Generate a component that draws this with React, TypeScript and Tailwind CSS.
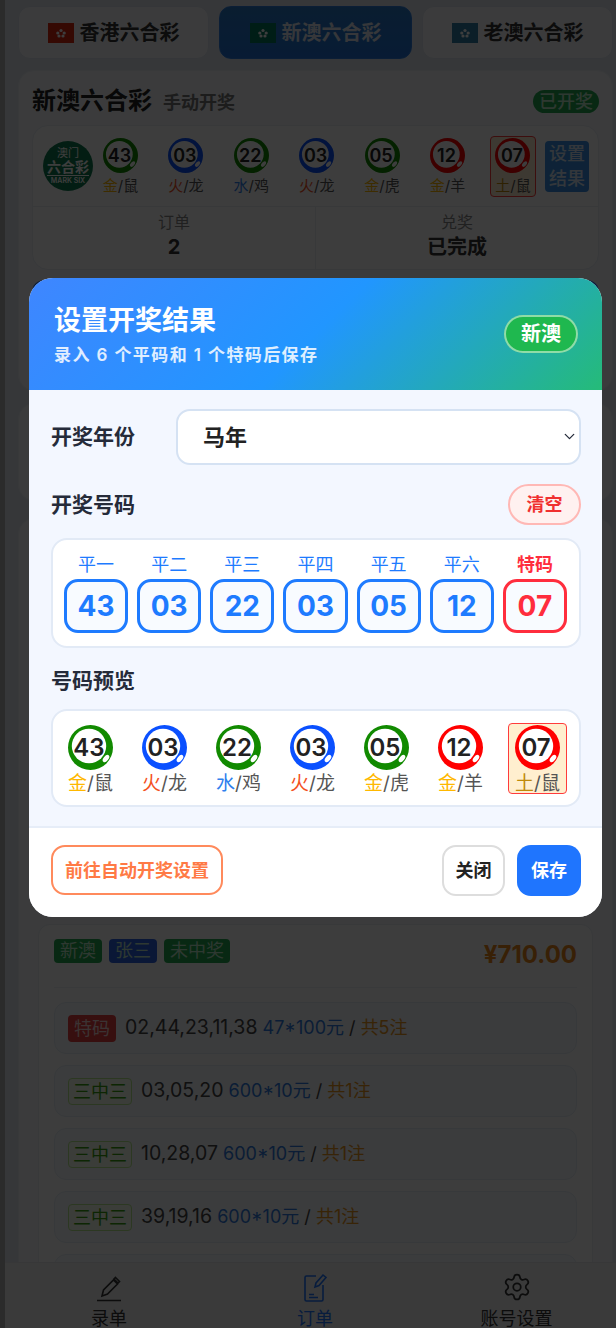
import { ChevronDown, Settings } from "lucide-react";

const font = "font-[Inter,'Noto_Sans_CJK_SC',sans-serif]";

const elementColor: Record<string, string> = {
  金: "text-[#ffb800]",
  火: "text-[#f4511e]",
  水: "text-[#2f80ed]",
  土: "text-[#c08a0a]",
};

const ballColor: Record<string, string> = {
  green: "#118a00",
  blue: "#0a50ff",
  red: "#ff0000",
};

const balls = [
  { no: "43", color: "green", el: "金", zodiac: "鼠" },
  { no: "03", color: "blue", el: "火", zodiac: "龙" },
  { no: "22", color: "green", el: "水", zodiac: "鸡" },
  { no: "03", color: "blue", el: "火", zodiac: "龙" },
  { no: "05", color: "green", el: "金", zodiac: "虎" },
  { no: "12", color: "red", el: "金", zodiac: "羊" },
];
const special = { no: "07", color: "red", el: "土", zodiac: "鼠" };

const slots = [
  ["平一", "43"],
  ["平二", "03"],
  ["平三", "22"],
  ["平四", "03"],
  ["平五", "05"],
  ["平六", "12"],
];

function Ball({ no, color, small }: { no: string; color: string; small?: boolean }) {
  return (
    <div className={`relative flex shrink-0 items-center justify-center ${small ? "h-[35px] w-[35px]" : "h-[45px] w-[45px]"}`}>
      <svg viewBox="0 0 45 45" className="absolute inset-0 h-full w-full">
        <circle cx="22.5" cy="22.5" r="22.5" fill={ballColor[color]} />
        <circle cx="21" cy="21" r="17.2" fill="#fff" />
        <ellipse cx="38" cy="33.5" rx="4.2" ry="2.4" fill="#fff" transform="rotate(-50 38 33.5)" />
      </svg>
      <span className={`relative font-semibold text-[#222] ${small ? "mr-[2px] text-[18px]" : "mr-[3px] text-[24px]"}`}>{no}</span>
    </div>
  );
}

function BallLabel({ el, zodiac, small }: { el: string; zodiac: string; small?: boolean }) {
  return (
    <div className={`whitespace-nowrap text-center text-[#555] ${small ? "mt-[3px] text-[15px] leading-[20px]" : "mt-[1px] text-[19px] leading-[25px]"}`}>
      <span className={elementColor[el]}>{el}</span>/{zodiac}
    </div>
  );
}

function OrderRow({ tag, nums, bet, count }: { tag: string; nums: string; bet: string; count: string }) {
  return (
    <div className="flex h-[52px] items-center gap-[9px] rounded-xl border border-[#e6eef6] bg-[#f7f9fc] pl-[13px] text-[18px] text-[#444]">
      {tag === "特码" ? (
        <span className="flex h-[27px] w-[48px] items-center justify-center rounded bg-[#e53e3e] text-[18px] text-[#f5d5d5]">{tag}</span>
      ) : (
        <span className="flex h-[27px] w-[64px] items-center justify-center rounded border border-[#b7eb8f] bg-[#f6ffed] text-[18px] text-[#389e0d]">{tag}</span>
      )}
      <span>
        <span className="text-[19.5px]">{nums}</span> <span className="text-[#2f7be0]">{bet}</span> / <span className="text-[#e8961e]">{count}</span>
      </span>
    </div>
  );
}

function Flag({ bg }: { bg: string }) {
  return (
    <svg viewBox="0 0 26 20" className="h-[20px] w-[26px] shrink-0">
      <rect width="26" height="20" fill={bg} />
      <circle cx="13" cy="7.5" r="1.6" fill="#fff" />
      <circle cx="9.800" cy="10" r="1.600" fill="#fff" />
      <circle cx="16.200" cy="10" r="1.600" fill="#fff" />
      <circle cx="11" cy="13" r="1.600" fill="#fff" />
      <circle cx="15" cy="13" r="1.600" fill="#fff" />
    </svg>
  );
}

export default function App() {
  return (
    <div className={`relative h-[1328px] w-[616px] overflow-hidden bg-[#b4b4b4] pl-[5px] ${font}`}>
      {/* page behind the dialog */}
      <div className="h-full bg-[#e3e7ee] pl-[13px] pr-[3px] pt-[6px]">
        <div className="flex gap-[10px]">
          <div className="flex h-[53px] w-[191px] items-center justify-center gap-[6px] rounded-xl border border-[#dde3ec] bg-[#f4f6fa] text-[20px] font-semibold text-[#333]">
            <Flag bg="#de2910" />
            香港六合彩
          </div>
          <div className="flex h-[53px] w-[193px] items-center justify-center gap-[6px] rounded-xl border border-[#2f7fe0] bg-gradient-to-b from-[#2a79c8] to-[#2272d8] text-[20px] font-semibold text-[#dfe6f0]">
            <Flag bg="#00785e" />
            新澳六合彩
          </div>
          <div className="flex h-[53px] w-[191px] items-center justify-center gap-[6px] rounded-xl border border-[#dde3ec] bg-[#f4f6fa] text-[20px] font-semibold text-[#333]">
            <Flag bg="#2f7ea8" />
            老澳六合彩
          </div>
        </div>

        <div className="mt-[11px] h-[321px] rounded-2xl border border-[#e8ecf3] bg-[#f4f6fa] px-[13px] pt-[14px]">
          <div className="flex items-center justify-between">
            <div className="flex items-baseline gap-[11px]">
              <span className="text-[24px] font-bold leading-[32px] text-[#222]">新澳六合彩</span>
              <span className="text-[18px] font-semibold text-[#777]">手动开奖</span>
            </div>
            <span className="rounded-full bg-[#22a94f] px-[6px] text-[18px] font-medium leading-[23px] text-[#bfe8cc]">已开奖</span>
          </div>

          <div className="mt-[8px] rounded-2xl border border-[#e8ecf3] bg-white">
            <div className="flex h-[81px] items-center gap-[8px] border-b border-[#e8ecf3] pl-[10px] pr-[9px]">
              <div className="mr-[2px] flex h-[50px] w-[50px] shrink-0 flex-col items-center justify-center rounded-full bg-[#0f7a50] text-white">
                <span className="text-[11px] leading-[12px]">澳门</span>
                <span className="border-b border-white text-[14px] font-bold leading-[16px]">六合彩</span>
                <span className="text-[7px] font-semibold leading-[10px]">MARK SIX</span>
              </div>
              <div className="flex flex-1 items-start gap-[30.4px]">
                {balls.map((b, i) => (
                  <div key={i} className="flex w-[35px] flex-col items-center pt-[2px]">
                    <Ball no={b.no} color={b.color} small />
                    <BallLabel el={b.el} zodiac={b.zodiac} small />
                  </div>
                ))}
                <div className="-ml-[5.4px] flex h-[61px] w-[46px] flex-col items-center rounded-sm border border-[#ff3b3b] bg-[#ffefcf] pt-[1px]">
                  <Ball no={special.no} color={special.color} small />
                  <BallLabel el={special.el} zodiac={special.zodiac} small />
                </div>
              </div>
              <div className="flex h-[51px] w-[44px] shrink-0 items-center justify-center rounded bg-[#3a90e6] text-center text-[18px] font-medium leading-[25px] text-[#d8e6f5]">
                设置
                <br />
                结果
              </div>
            </div>
            <div className="flex h-[62px] text-center">
              <div className="flex-1 border-r border-[#e8ecf3] pt-[3px]">
                <div className="text-[16px] leading-[24px] text-[#888]">订单</div>
                <div className="text-[20px] font-bold leading-[26px] text-[#333]">2</div>
              </div>
              <div className="flex-1 pt-[3px]">
                <div className="text-[16px] leading-[24px] text-[#888]">兑奖</div>
                <div className="text-[20px] font-bold leading-[26px] text-[#333]">已完成</div>
              </div>
            </div>
          </div>
          <div className="mt-[10px] h-[50px] rounded-xl bg-[#1f75fe]" />
        </div>

        <div className="mt-[12px] h-[98px] rounded-2xl border border-[#e8ecf3] bg-[#f4f6fa]" />

        <div className="mt-[17px] h-[800px] rounded-2xl border border-[#e8ecf3] bg-[#f4f6fa] px-[19px] pt-[405px]">
          <div className="rounded-xl border border-[#e8ecf3] bg-white px-[15px] pt-[14px]">
            <div className="flex h-[49px] items-start justify-between border-b border-[#eef2f7]">
              <div className="flex gap-[7px] text-[18px] leading-[24px] text-[#bfe8cc]">
                <span className="rounded-sm bg-[#22a94f] px-[6px]">新澳</span>
                <span className="rounded-sm bg-[#2b62e3] px-[6px]">张三</span>
                <span className="rounded-sm bg-[#22a94f] px-[6px]">未中奖</span>
              </div>
              <span className="text-[24px] font-bold leading-[32px] text-[#e8861a]">¥710.00</span>
            </div>
            <div className="flex flex-col gap-[11px] pt-[14px]">
              <OrderRow tag="特码" nums="02,44,23,11,38" bet="47*100元" count="共5注" />
              <OrderRow tag="三中三" nums="03,05,20" bet="600*10元" count="共1注" />
              <OrderRow tag="三中三" nums="10,28,07" bet="600*10元" count="共1注" />
              <OrderRow tag="三中三" nums="39,19,16" bet="600*10元" count="共1注" />
              <OrderRow tag="三中三" nums="11,23,35" bet="600*10元" count="共1注" />
            </div>
          </div>
        </div>
      </div>

      {/* bottom nav */}
      <div className="absolute bottom-0 left-[5px] right-0 flex h-[66px] border-t border-[#e5e7eb] bg-[#f0f1f3] text-[18px] leading-[19px] text-[#333]">
        <div className="flex w-[208px] flex-col items-center pt-[11px]">
          <svg viewBox="0 0 28 28" className="h-[28px] w-[28px] shrink-0" fill="none" stroke="currentColor" strokeWidth="1.6">
            <path d="M2 26.500h24M7 22l1.500-6L18.500 6l4 4L12.500 20z M20.500 3.500l4 4-1.500 1.500-4-4z" />
          </svg>
          <span className="mt-[7px]">录单</span>
        </div>
        <div className="flex w-[204px] flex-col items-center pt-[10px] text-[#1f75fe]">
          <svg viewBox="0 0 24 29" className="h-[29px] w-[24px] shrink-0" fill="none" stroke="currentColor" strokeWidth="1.6">
            <path d="M13 3H3.500Q2 3 2 4.500v22Q2 28 3.500 28h15q1.500 0 1.500-1.500V12" />
            <path d="M12 14l1-4 7-8 3 2.500-7 8z" />
            <path d="M6 21.500h5M6 24.500h9" />
          </svg>
          <span className="mt-[7px]">订单</span>
        </div>
        <div className="flex flex-1 flex-col items-center pt-[9px]">
          <Settings size={30} strokeWidth={1.4} className="shrink-0" />
          <span className="mt-[7px]">账号设置</span>
        </div>
      </div>

      {/* dim layer */}
      <div className="absolute inset-0 bg-black/76" />

      {/* dialog */}
      <div className="absolute left-[29px] top-[278px] flex h-[639px] w-[573px] flex-col overflow-hidden rounded-[24px] bg-[#f3f7ff]">
        <div className="flex h-[112px] shrink-0 items-center justify-between bg-[linear-gradient(135deg,#3f86ff_0%,#2196ff_50%,#25bb78_100%)] pl-[25px] pr-[24px]">
          <div className="mt-[3px]">
            <div className="text-[27px] font-bold leading-[34px] text-white">设置开奖结果</div>
            <div className="mt-[5px] text-[17px] font-semibold leading-[24px] tracking-[1.4px] text-white/85">录入 6 个平码和 1 个特码后保存</div>
          </div>
          <span className="rounded-full border-2 border-white/50 bg-[#1fb84f] px-[15px] text-[20px] font-bold leading-[34px] text-white">新澳</span>
        </div>

        <div className="flex-1 pl-[22px] pr-[21px] pt-[19px]">
          <div className="flex items-center">
            <span className="w-[125px] text-[21px] font-bold text-[#252b3a]">开奖年份</span>
            <div className="relative flex-1">
              <select className="h-[56px] w-full appearance-none rounded-[14px] border-2 border-[#d5e2f3] bg-white pl-[25px] text-[22px] font-bold text-[#222]" defaultValue="马年">
                <option>马年</option>
              </select>
              <ChevronDown size={17} strokeWidth={1.8} className="absolute right-[3px] top-[19px] text-[#252b3a]" />
            </div>
          </div>

          <div className="mt-[19px] flex items-center justify-between">
            <span className="text-[21px] font-bold text-[#252b3a]">开奖号码</span>
            <button className="h-[41px] w-[73px] rounded-full border-2 border-[#ffb8b5] bg-[#fff1f0] text-[18px] font-bold text-[#f03030]">清空</button>
          </div>

          <div className="mt-[13px] h-[110px] rounded-2xl border-2 border-[#e2eaf6] bg-white pl-[11px] pr-3 pt-[11px]">
            <div className="grid grid-cols-7 gap-[9px]">
              {slots.map(([label, value], i) => (
                <div key={i} className="flex flex-col items-center">
                  <span className="text-[18px] leading-[28px] text-[#1e7bff]">{label}</span>
                  <div className="flex h-[54px] w-full items-center justify-center rounded-[14px] border-[3px] border-[#1e7bff] bg-[#f8fbff] text-[28px] font-bold text-[#1e7bff]">{value}</div>
                </div>
              ))}
              <div className="flex flex-col items-center">
                <span className="text-[18px] font-bold leading-[28px] text-[#ff2d3d]">特码</span>
                <div className="flex h-[54px] w-full items-center justify-center rounded-[14px] border-[3px] border-[#ff2d3d] bg-[#f8fbff] text-[28px] font-bold text-[#ff2d3d]">07</div>
              </div>
            </div>
          </div>

          <div className="mt-[19px] text-[21px] font-bold leading-[28px] text-[#252b3a]">号码预览</div>

          <div className="mt-[14px] flex h-[98px] items-start gap-[29px] rounded-2xl border-2 border-[#e2eaf6] bg-white pl-[15px] pt-[14px]">
            {balls.map((b, i) => (
              <div key={i} className="flex w-[45px] flex-col items-center">
                <Ball no={b.no} color={b.color} />
                <BallLabel el={b.el} zodiac={b.zodiac} />
              </div>
            ))}
            <div className="-ml-[4px] -mt-[2px] flex h-[71px] w-[59px] flex-col items-center rounded-sm border border-[#ff3b3b] bg-[#ffefcf] pt-[1px]">
              <Ball no={special.no} color={special.color} />
              <BallLabel el={special.el} zodiac={special.zodiac} />
            </div>
          </div>
        </div>

        <div className="flex h-[91px] shrink-0 items-start justify-between border-t-2 border-[#e6edf8] bg-white pl-[22px] pr-[21px] pt-[17px]">
          <button className="h-[50px] w-[172px] rounded-[14px] border-2 border-[#ff8a5c] bg-white text-[18px] font-bold text-[#ff7a45]">前往自动开奖设置</button>
          <div className="flex gap-[12px]">
            <button className="h-[51px] w-[63px] rounded-[14px] border-2 border-[#ddd] bg-white text-[18px] font-bold text-[#222]">关闭</button>
            <button className="h-[51px] w-[64px] rounded-[14px] bg-[#1f75fe] text-[18px] font-bold text-white">保存</button>
          </div>
        </div>
      </div>
    </div>
  );
}
